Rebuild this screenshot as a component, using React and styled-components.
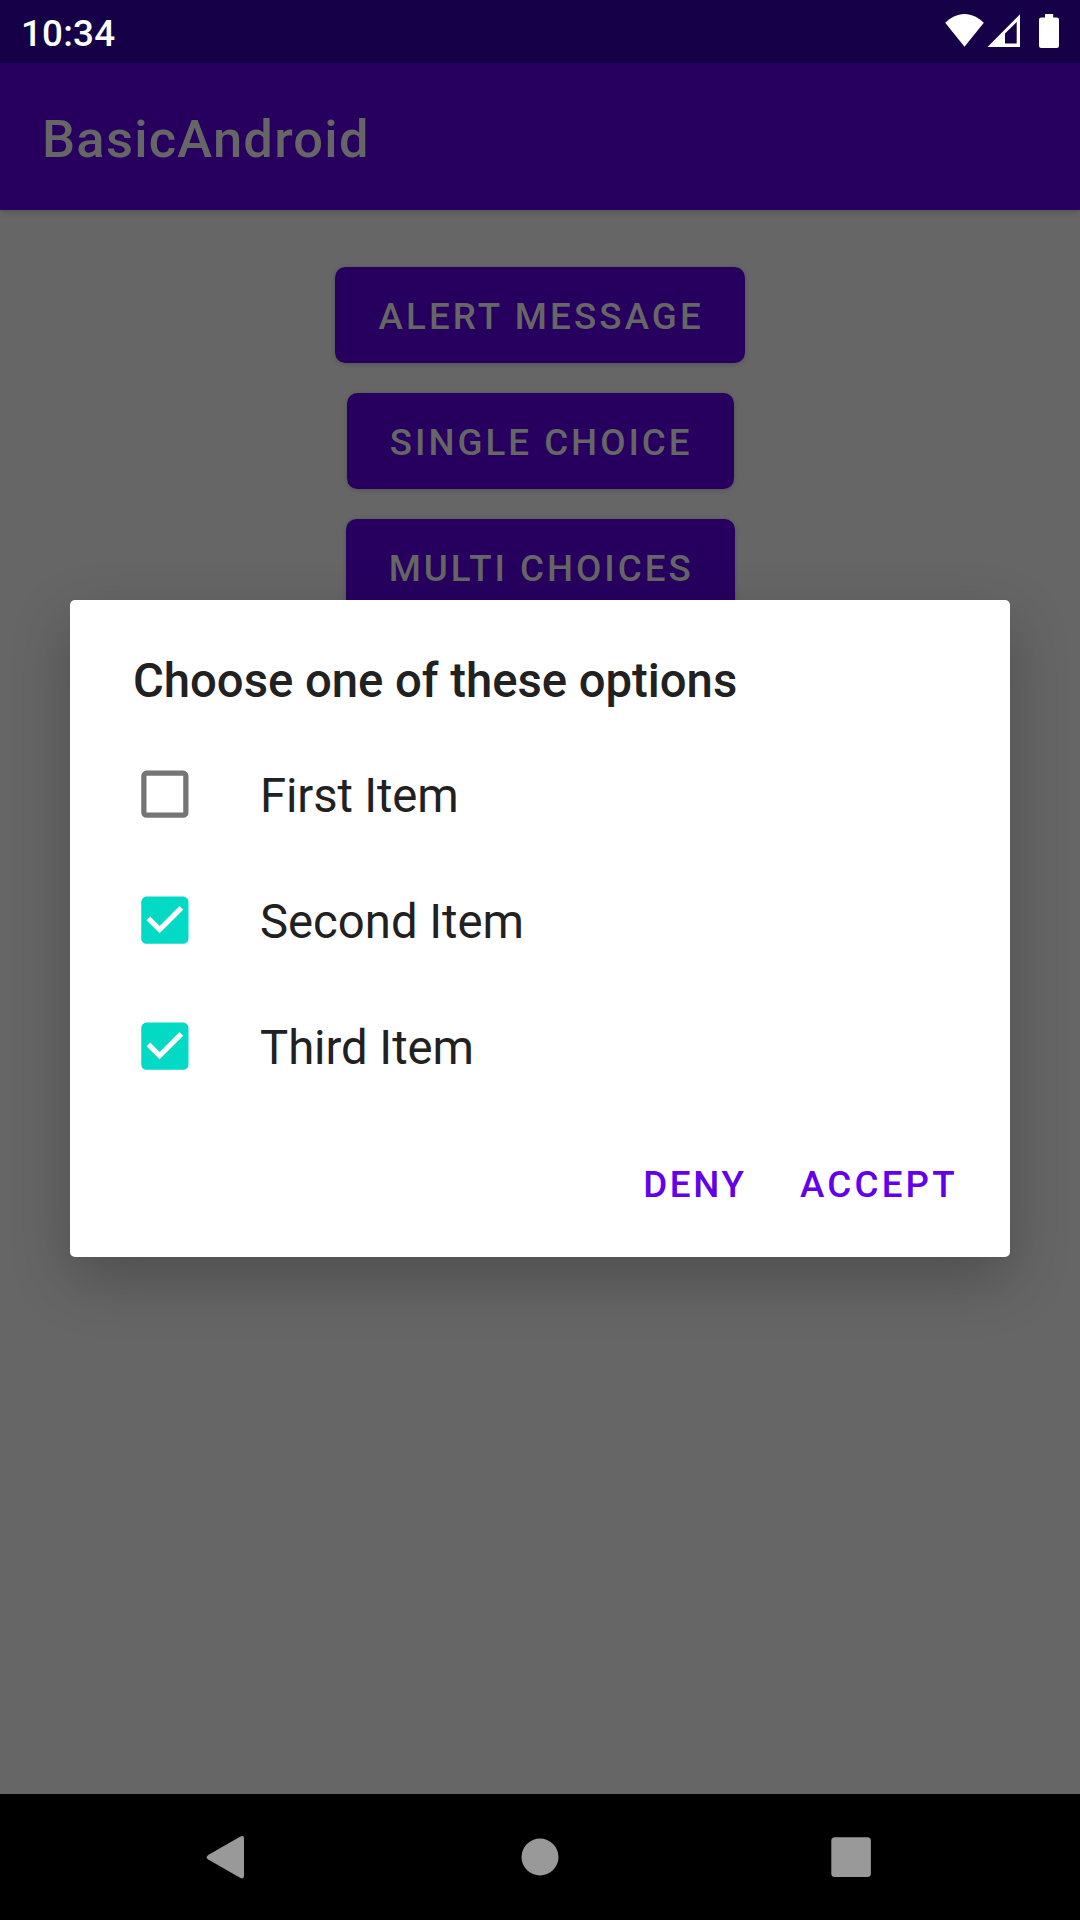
import React, { useState } from 'react';
import styled, { createGlobalStyle } from 'styled-components';

const GlobalStyle = createGlobalStyle`
  * { box-sizing: border-box; }
  body { margin: 0; background: #666666; font-family: Roboto, 'Noto Sans', sans-serif; }
`;

const Screen = styled.div`
  position: relative;
  display: flex;
  flex-direction: column;
  width: 1080px;
  height: 1920px;
  overflow: hidden;
  background: #666666;
`;

const StatusBar = styled.header`
  display: flex;
  flex: none;
  align-items: center;
  justify-content: space-between;
  height: 63px;
  padding: 0 21px;
  background: #160048;
`;

const Clock = styled.time`
  padding-top: 4px;
  color: #ffffff;
  font-size: 36.75px;
  font-weight: 500;
  line-height: 44px;
  letter-spacing: 0.2px;
`;

const StatusIcons = styled.svg`
  width: 118px;
  height: 63px;
  fill: #ffffff;
`;

const AppBar = styled.div`
  display: flex;
  flex: none;
  align-items: center;
  height: 147px;
  padding: 4px 42px 0;
  background: #27005f;
  box-shadow: 0 2px 6px rgba(0, 0, 0, 0.18);
`;

const AppTitle = styled.h1`
  margin: 0;
  color: #666666;
  font-size: 52.5px;
  font-weight: 500;
  line-height: 62px;
  letter-spacing: 1.22px;
`;

const Content = styled.main`
  display: flex;
  flex: 1;
  flex-direction: column;
  align-items: center;
  gap: 30px;
  padding-top: 57px;
`;

const ContainedButton = styled.button`
  width: ${({ $width }) => $width}px;
  height: 96px;
  padding: 3px 0 0 2.4px;
  border: 0;
  border-radius: 10.5px;
  background: #27005f;
  box-shadow: 0 1px 5px rgba(0, 0, 0, 0.2);
  color: #666666;
  font: 500 36.75px/44px Roboto, 'Noto Sans', sans-serif;
  letter-spacing: ${({ $tracking }) => $tracking}px;
  white-space: nowrap;
`;

const NavBar = styled.nav`
  display: flex;
  flex: none;
  align-items: center;
  justify-content: center;
  gap: 247px;
  height: 126px;
  background: #000000;
`;

const NavIcon = styled.svg`
  width: 63px;
  height: 63px;
  fill: #999999;
`;

const Dialog = styled.section`
  position: absolute;
  top: 600px;
  left: 70px;
  display: flex;
  flex-direction: column;
  width: 940px;
  height: 657px;
  padding-top: 49px;
  border-radius: 5px;
  background: #ffffff;
  box-shadow: 0 22px 60px rgba(0, 0, 0, 0.24);
`;

const DialogTitle = styled.h2`
  margin: 0 0 18px;
  padding: 0 63px;
  color: #212121;
  font-size: 47.25px;
  font-weight: 500;
  line-height: 64px;
  letter-spacing: -0.02px;
`;

const Option = styled.div`
  display: flex;
  align-items: center;
  gap: 64px;
  height: 126px;
  padding-left: 63px;
  cursor: pointer;
`;

const CheckIcon = styled.svg`
  width: 63px;
  height: 63px;
  fill: ${({ $checked }) => ($checked ? '#03dac6' : '#757575')};
`;

const OptionLabel = styled.span`
  padding-top: 4px;
  color: #212121;
  font-size: 47.25px;
  line-height: 56px;
  letter-spacing: ${({ $tracking }) => $tracking}px;
`;

const Actions = styled.footer`
  display: flex;
  justify-content: flex-end;
  padding: 27px 25.6px 0 0;
`;

const TextButton = styled.button`
  height: 94px;
  padding: 3px 26.7px 0;
  border: 0;
  background: transparent;
  color: #6200ee;
  font: 500 36.75px/44px Roboto, 'Noto Sans', sans-serif;
  letter-spacing: ${({ $tracking }) => $tracking}px;
`;

const BUTTONS = [
  { label: 'ALERT MESSAGE', width: 410, tracking: 3.12 },
  { label: 'SINGLE CHOICE', width: 387, tracking: 2.97 },
  { label: 'MULTI CHOICES', width: 389, tracking: 2.97 },
];

function Checkbox({ checked }) {
  return (
    <CheckIcon $checked={checked} viewBox="-0.14 0.1 24 24">
      {checked ? (
        <path d="M19 3H5a2 2 0 0 0-2 2v14a2 2 0 0 0 2 2h14a2 2 0 0 0 2-2V5a2 2 0 0 0-2-2zm-9 14l-5-5 1.41-1.41L10 14.17l7.59-7.59L19 8l-9 9z" />
      ) : (
        <path d="M19 5v14H5V5h14m0-2H5a2 2 0 0 0-2 2v14a2 2 0 0 0 2 2h14a2 2 0 0 0 2-2V5a2 2 0 0 0-2-2z" />
      )}
    </CheckIcon>
  );
}

export default function App() {
  const [options, setOptions] = useState([
    { label: 'First Item', checked: false, tracking: -0.15 },
    { label: 'Second Item', checked: true, tracking: 0 },
    { label: 'Third Item', checked: true, tracking: -0.05 },
  ]);
  const toggle = (index) =>
    setOptions(options.map((o, i) => (i === index ? { ...o, checked: !o.checked } : o)));

  return (
    <>
      <GlobalStyle />
      <Screen>
        <StatusBar>
          <Clock>10:34</Clock>
          <StatusIcons viewBox="941 0 118 63">
            <path d="M945.2 22.8C950.5 17.5 957 14 964.5 14S978.5 17.5 983.8 22.8L964.5 46.8z" />
            <path fillRule="evenodd" d="M987.5 47L1020 14.3V47zM1005 43.5H1016.7V22L1005 33.5z" />
            <path d="M1045 14h8.2v3.5h3.6a2.2 2.2 0 0 1 2.2 2.2v26a2.2 2.2 0 0 1-2.2 2.2h-15.6a2.2 2.2 0 0 1-2.2-2.2v-26a2.2 2.2 0 0 1 2.2-2.2h3.8z" />
          </StatusIcons>
        </StatusBar>
        <AppBar>
          <AppTitle>BasicAndroid</AppTitle>
        </AppBar>
        <Content>
          {BUTTONS.map(({ label, width, tracking }) => (
            <ContainedButton key={label} $width={width} $tracking={tracking}>{label}</ContainedButton>
          ))}
        </Content>
        <NavBar>
          <NavIcon viewBox="0 0 63 63">
            <path d="M9.2 29L41 10.8Q45 8.800 45 12.5V50Q45 53.7 41 51.7L9.2 33.5Q6 31.3 9.2 29z" />
          </NavIcon>
          <NavIcon viewBox="0 0 63 63">
            <circle cx="31" cy="31" r="18.5" />
          </NavIcon>
          <NavIcon viewBox="0 0 63 63">
            <rect x="12.3" y="11.3" width="39.6" height="39.6" rx="3.5" />
          </NavIcon>
        </NavBar>
        <Dialog role="dialog">
          <DialogTitle>Choose one of these options</DialogTitle>
          {options.map((option, index) => (
            <Option key={option.label} onClick={() => toggle(index)}>
              <Checkbox checked={option.checked} />
              <OptionLabel $tracking={option.tracking}>{option.label}</OptionLabel>
            </Option>
          ))}
          <Actions>
            <TextButton $tracking={2.7}>DENY</TextButton>
            <TextButton $tracking={3.15}>ACCEPT</TextButton>
          </Actions>
        </Dialog>
      </Screen>
    </>
  );
}
